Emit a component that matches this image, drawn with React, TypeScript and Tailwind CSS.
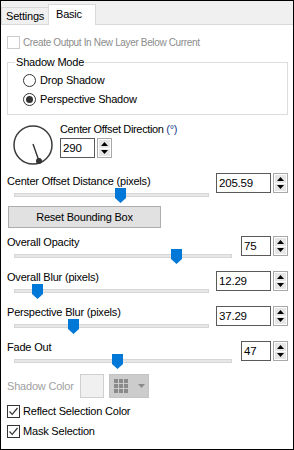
import React from 'react';

const Arrow = ({ up }: { up?: boolean }) => (
  <svg width="7" height="4" viewBox="0 0 7 4">
    <path d={up ? 'M0 4 L3.5 0 L7 4 Z' : 'M0 0 L7 0 L3.5 4 Z'} fill="#000" />
  </svg>
);

const Spin = ({ value, box }: { value: string; box: string }) => (
  <div className="flex h-[20px] gap-[2px]">
    <div className={`${box} h-[20px] border border-[#5a5a5a] bg-white pl-[2px] text-[11.5px] leading-[18px] text-black`}>
      {value}
    </div>
    <div className="flex h-[20px] w-[15px] flex-col gap-[1px] border border-[#a8a8a8] bg-white p-[1px]">
      <div className="flex flex-1 items-center justify-center bg-[#e6e6e6]">
        <Arrow up />
      </div>
      <div className="flex flex-1 items-center justify-center bg-[#e6e6e6]">
        <Arrow />
      </div>
    </div>
  </div>
);

const Thumb = () => (
  <svg width="11" height="15" viewBox="0 0 11 15">
    <path d="M0 0 H11 V10 L5.5 15 L0 10 Z" fill="#0078d7" />
  </svg>
);

type SliderProps = {
  label: string;
  value: string;
  track: string;
  box: string;
  thumb: number;
  height: string;
  labelTop?: string;
};

const SliderRow = ({ label, value, track, box, thumb, height, labelTop = 'mt-0' }: SliderProps) => (
  <div className={`flex ${height} justify-between`}>
    <div className="flex flex-col">
      <div className={`${labelTop} h-[13px] leading-[13px] text-black`}>{label}</div>
      <div className={`relative ml-[7px] h-[15px] ${track}`}>
        <div className="mt-[5px] h-[4px] border border-[#d6d6d6] bg-[#e7e7e7]" />
        <div className="absolute top-0" style={{ left: thumb }}>
          <Thumb />
        </div>
      </div>
    </div>
    <Spin value={value} box={box} />
  </div>
);

const CheckBox = ({ checked, disabled }: { checked?: boolean; disabled?: boolean }) => (
  <div
    className={`flex h-[13px] w-[13px] items-center justify-center border bg-white ${
      disabled ? 'border-[#cccccc]' : 'border-[#333333]'
    }`}
  >
    {checked && (
      <svg width="11" height="11" viewBox="0 0 11 11">
        <path d="M1.5 5.5 L4.2 8.3 L9.5 2" fill="none" stroke="#333" strokeWidth="1.2" />
      </svg>
    )}
  </div>
);

const Radio = ({ checked, label }: { checked?: boolean; label: string }) => (
  <div className="flex h-[13px] items-center gap-[4px]">
    <div className="flex h-[13px] w-[13px] items-center justify-center rounded-full border border-[#333333] bg-white">
      {checked && <div className="h-[7px] w-[7px] rounded-full bg-[#333333]" />}
    </div>
    <span className="leading-[13px] text-black">{label}</span>
  </div>
);

export default function App() {
  return (
    <div
      className="flex h-[450px] w-[294px] flex-col border border-black bg-white text-[11px] tracking-[-0.2px]"
      style={{ fontFamily: '"Liberation Sans", Arial, sans-serif' }}
    >
      <div className="flex h-[24px] items-end border-b border-[#d9d9d9] bg-[#f0f0f0]">
        <div className="flex h-[17px] w-[47px] items-center border-t border-l border-[#d9d9d9] pl-[4px] text-black">
          Settings
        </div>
        <div className="mb-[-1px] flex h-[21px] w-[48px] items-center border-x border-t border-[#d9d9d9] bg-white pl-[7px] pb-[2px] text-black">
          Basic
        </div>
      </div>

      <div className="flex flex-col pl-[6px] pr-[5px]">
        <div className="mt-[11px] flex h-[13px] items-center gap-[3px]">
          <CheckBox disabled />
          <span className="text-[10px] leading-[13px] tracking-[-0.35px] text-[#8c8c8c]">
            Create Output In New Layer Below Current
          </span>
        </div>

        <fieldset className="mt-[7px] w-[281px] border border-[#dcdcdc] pb-[8px] pl-[15px]">
          <legend className="ml-[-8px] px-[1px] leading-[13px] text-black">Shadow Mode</legend>
          <div className="mt-[5px] flex flex-col gap-[6px]">
            <Radio label="Drop Shadow" />
            <Radio checked label="Perspective Shadow" />
          </div>
        </fieldset>

        <div className="mt-[8px] flex h-[50px]">
          <svg width="44" height="44" viewBox="0 0 44 44" className="ml-[5px] shrink-0">
            <circle cx="21" cy="22" r="19" fill="none" stroke="#3c3c3c" strokeWidth="1.5" />
            <line x1="21" y1="21" x2="27" y2="38" stroke="#333" strokeWidth="1.4" />
            <circle cx="27" cy="38" r="3" fill="#333" />
          </svg>
          <div className="ml-[4px] flex flex-col">
            <div className="h-[13px] leading-[13px] tracking-[-0.35px] text-black">
              Center Offset Direction <span className="text-[#1a3c8c]">(°)</span>
            </div>
            <div className="mt-[2px]">
              <Spin value="290" box="w-[35px]" />
            </div>
          </div>
        </div>

        <SliderRow
          label="Center Offset Distance (pixels)"
          value="205.59"
          track="w-[195px]"
          box="w-[55px]"
          thumb={101}
          height="h-[33px]"
          labelTop="mt-[2px]"
        />

        <div className="ml-[1px] flex h-[22px] w-[153px] items-center justify-center border border-[#adadad] bg-[#e1e1e1] text-black">
          Reset Bounding Box
        </div>

        <div className="mt-[8px]">
          <SliderRow label="Overall Opacity" value="75" track="w-[218px]" box="w-[30px]" thumb={157} height="h-[35px]" />
        </div>
        <SliderRow label="Overall Blur (pixels)" value="12.29" track="w-[195px]" box="w-[55px]" thumb={18} height="h-[35px]" />
        <SliderRow label="Perspective Blur (pixels)" value="37.29" track="w-[195px]" box="w-[55px]" thumb={54} height="h-[35px]" />
        <SliderRow label="Fade Out" value="47" track="w-[218px]" box="w-[30px]" thumb={98} height="h-[33px]" />

        <div className="flex h-[24px] items-center">
          <span className="w-[73px] text-[#a0a0a0]">Shadow Color</span>
          <div className="h-[24px] w-[24px] border border-[#cfcfcf] bg-[#f0f0f0]" />
          <div className="ml-[5px] flex h-[24px] w-[40px] items-center border border-[#c4c4c4] bg-[#cccccc] pl-[4px]">
            <div className="grid grid-cols-3 gap-[1px]">
              {Array.from({ length: 9 }).map((_, i) => (
                <div key={i} className="h-[4px] w-[4px] bg-[#8a8a8a]" />
              ))}
            </div>
            <svg width="7" height="4" viewBox="0 0 7 4" className="ml-[10px]">
              <path d="M0 0 L7 0 L3.5 4 Z" fill="#8a8a8a" />
            </svg>
          </div>
        </div>

        <div className="mt-[7px] flex h-[13px] items-center gap-[3px]">
          <CheckBox checked />
          <span className="leading-[13px] text-black">Reflect Selection Color</span>
        </div>
        <div className="mt-[7px] flex h-[13px] items-center gap-[3px]">
          <CheckBox checked />
          <span className="leading-[13px] text-black">Mask Selection</span>
        </div>
      </div>
    </div>
  );
}
